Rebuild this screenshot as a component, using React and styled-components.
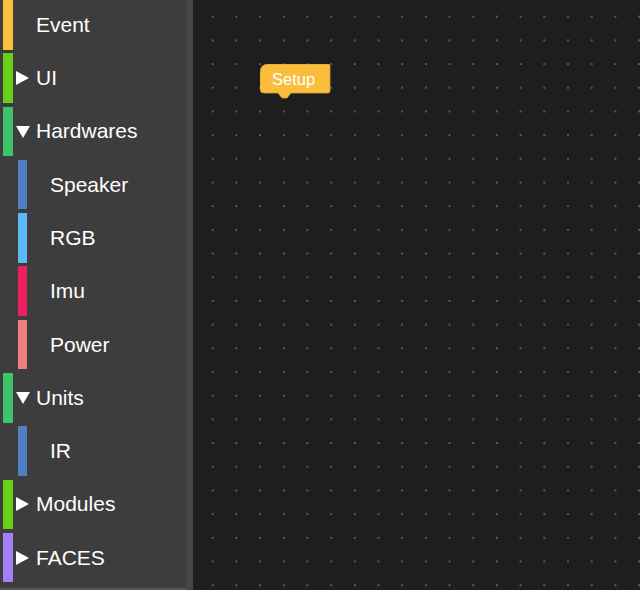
import React from "react";
import styled, { createGlobalStyle } from "styled-components";

const GlobalStyle = createGlobalStyle`
  html, body {
    margin: 0;
    padding: 0;
    background: #1e1e1e;
  }
  body {
    font-family: "Liberation Sans", Arial, sans-serif;
  }
`;

const Page = styled.div`
  display: flex;
  width: 640px;
  height: 590px;
  overflow: hidden;
`;

const Toolbox = styled.div`
  display: flex;
  flex-direction: column;
  width: 186px;
  height: 590px;
  background: #3d3d3d;
  border-bottom: 2px solid #555;
  box-sizing: border-box;
  overflow: hidden;
`;

const ScrollStrip = styled.div`
  width: 7px;
  height: 590px;
  background: #474747;
`;

const Row = styled.div`
  display: flex;
  align-items: center;
  flex-shrink: 0;
  height: 49.5px;
  margin-bottom: 3.8px;
`;

const Bar = styled.div`
  align-self: stretch;
  width: ${(p) => (p.$sub ? "9px" : "10px")};
  margin-left: ${(p) => (p.$sub ? "18px" : "3px")};
  background: ${(p) => p.$color};
`;

const Toggle = styled.div`
  display: flex;
  align-items: center;
  width: 23px;
  padding-left: 3px;
  box-sizing: border-box;
`;

const ArrowRight = styled.span`
  width: 0;
  height: 0;
  border-top: 7px solid transparent;
  border-bottom: 7px solid transparent;
  border-left: 13px solid #fff;
`;

const ArrowDown = styled.span`
  width: 0;
  height: 0;
  margin-top: 1px;
  border-left: 7px solid transparent;
  border-right: 7px solid transparent;
  border-top: 12px solid #fff;
`;

const Label = styled.span`
  color: #fff;
  font-size: 21px;
  line-height: 1;
  margin-top: -1px;
`;

const Canvas = styled.div`
  position: relative;
  flex: 1;
  height: 590px;
  background-color: #1e1e1e;
  background-image: radial-gradient(circle, #5a5a5a 1px, transparent 1.4px);
  background-size: 23.7px 23.7px;
  background-position: 7.85px 4.85px;
`;

const HatBlock = styled.div`
  position: absolute;
  left: 67px;
  top: 64px;
  width: 72px;
  height: 35px;
`;

const HatShape = styled.svg`
  position: absolute;
  left: 0;
  top: 0;
`;

const HatText = styled.span`
  position: absolute;
  left: 12px;
  top: 6px;
  color: #fff;
  font-size: 16.5px;
  line-height: 18px;
`;

const categories = [
  { name: "Event", color: "#fbc03e" },
  { name: "UI", color: "#66cf16", arrow: "right" },
  { name: "Hardwares", color: "#3dc46b", arrow: "down" },
  { name: "Speaker", color: "#4e80c3", sub: true },
  { name: "RGB", color: "#5bb8f9", sub: true },
  { name: "Imu", color: "#ec1f5f", sub: true },
  { name: "Power", color: "#ee7f82", sub: true },
  { name: "Units", color: "#3dc46b", arrow: "down" },
  { name: "IR", color: "#4e80c3", sub: true },
  { name: "Modules", color: "#66cf16", arrow: "right" },
  { name: "FACES", color: "#a57dfb", arrow: "right" },
];

function Category({ item }) {
  return (
    <Row>
      <Bar $color={item.color} $sub={item.sub} />
      <Toggle>
        {item.arrow === "right" && <ArrowRight />}
        {item.arrow === "down" && <ArrowDown />}
      </Toggle>
      <Label>{item.name}</Label>
    </Row>
  );
}

export default function App() {
  return (
    <Page>
      <GlobalStyle />
      <Toolbox>
        {categories.map((c) => (
          <Category key={c.name} item={c} />
        ))}
      </Toolbox>
      <ScrollStrip />
      <Canvas>
        <HatBlock>
          <HatShape width="72" height="35" viewBox="0 0 72 35">
            <path
              d="M9 0 H68 Q70 0 70 2 V27 Q70 29 68 29 H31 L27 34 H22 L18 29 H4 Q0 29 0 25 V9 Q0 0 9 0 Z"
              fill="#fbbe3c"
              stroke="#d9a02c"
              strokeWidth="0.8"
            />
          </HatShape>
          <HatText>Setup</HatText>
        </HatBlock>
      </Canvas>
    </Page>
  );
}
